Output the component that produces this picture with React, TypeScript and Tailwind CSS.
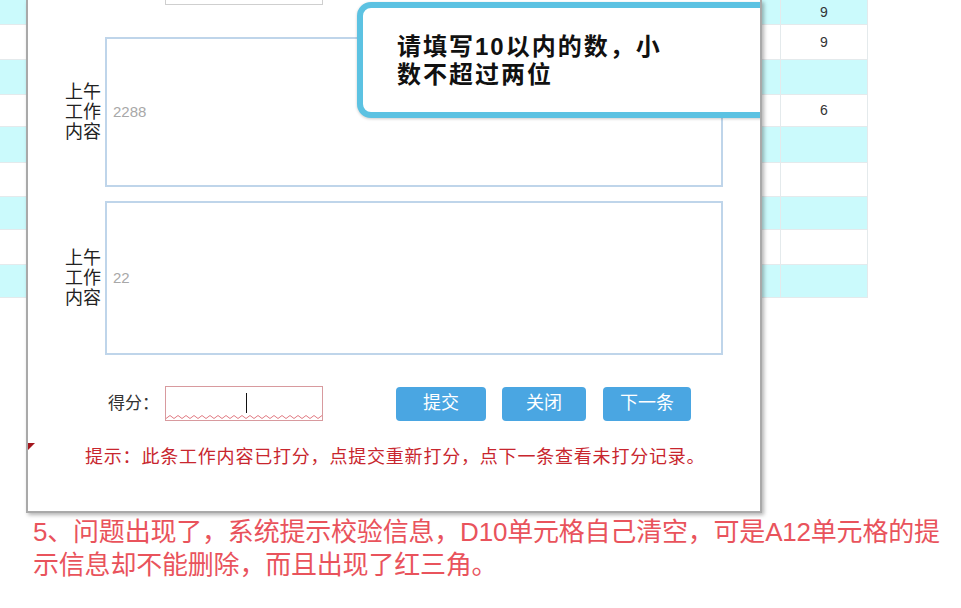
import React from 'react';

const rows = [
  { h: 25, cyan: true, value: '9' },
  { h: 35, cyan: false, value: '9' },
  { h: 35, cyan: true, value: '' },
  { h: 32, cyan: false, value: '6' },
  { h: 36, cyan: true, value: '' },
  { h: 34, cyan: false, value: '' },
  { h: 33, cyan: true, value: '' },
  { h: 35, cyan: false, value: '' },
  { h: 33, cyan: true, value: '' },
];

const WorkField: React.FC<{ value: string; height: string; className?: string }> = ({ value, height, className }) => (
  <div className={`flex items-center pl-[37px] ${className ?? ''}`}>
    <div className="w-[36px] text-[18px] leading-[20px] text-[#222] text-right">
      上午
      <br />
      工作
      <br />
      内容
    </div>
    <div className={`ml-[4px] w-[618px] ${height} border-2 border-[#bfd5ea] bg-white flex items-center pl-[6px] text-[15px] text-[#a8a8a8]`}>
      {value}
    </div>
  </div>
);

export default function App() {
  return (
    <div
      className="relative w-[961px] h-[608px] overflow-hidden bg-white"
      style={{ fontFamily: '"Liberation Sans", "Noto Sans CJK SC", sans-serif' }}
    >
      {/* sheet rows behind the dialog */}
      <div className="w-[868px]">
        {rows.map((row, i) => (
          <div key={i} className={`flex ${row.cyan ? 'bg-[#cbfafc]' : 'bg-white'}`} style={{ height: row.h }}>
            <div className="w-[781px] border-r border-b border-[#e4eaec]" />
            <div className="w-[87px] border-r border-b border-[#e4eaec] flex items-center justify-center text-[14px] text-[#333]">
              {row.value}
            </div>
          </div>
        ))}
      </div>

      <div className="mt-[218px] pl-[33px] text-[26px] leading-[33px] tracking-[-0.2px] text-[#e9535c] whitespace-nowrap">
        <div>5、问题出现了，系统提示校验信息，D10单元格自己清空，可是A12单元格的提</div>
        <div>示信息却不能删除，而且出现了红三角。</div>
      </div>

      {/* scoring dialog */}
      <div className="absolute left-[26px] top-0 w-[736px] h-[513px] bg-white border-x-2 border-b-2 border-[#a9a9a9] shadow-[2px_2px_4px_rgba(0,0,0,0.3)] overflow-hidden">
        <div className="ml-[137px] mt-[-30px] w-[158px] h-[35px] border border-[#cfcfcf]" />

        <WorkField value="2288" height="h-[150px]" className="mt-[32px]" />
        <WorkField value="22" height="h-[154px]" className="mt-[14px]" />

        <div className="mt-[31px] flex items-center pl-[80px] h-[35px]">
          <span className="shrink-0 whitespace-nowrap w-[57px] text-[17px] text-[#333]">得分：</span>
          <div className="relative shrink-0 w-[158px] h-[35px] border border-[#d89a9e] bg-white">
            <div className="absolute left-[80px] top-[6px] w-[1px] h-[20px] bg-[#111]" />
            <svg className="absolute left-0 bottom-[1px]" width="156" height="4" viewBox="0 0 156 4">
              <polyline
                fill="none"
                stroke="#e07a82"
                strokeWidth="1"
                points={Array.from({ length: 40 }, (_, k) => `${k * 4},${k % 2 === 0 ? 3.5 : 0.5}`).join(' ')}
              />
            </svg>
          </div>
          <button className="shrink-0 ml-[73px] w-[90px] h-[34px] rounded-[4px] bg-[#4aa6e2] text-white text-[18px]">提交</button>
          <button className="shrink-0 ml-[16px] w-[84px] h-[34px] rounded-[4px] bg-[#4aa6e2] text-white text-[18px]">关闭</button>
          <button className="shrink-0 ml-[17px] w-[88px] h-[34px] rounded-[4px] bg-[#4aa6e2] text-white text-[18px]">下一条</button>
        </div>

        <div className="mt-[24px] pl-[57px] text-[18px] leading-[24px] tracking-[0.8px] text-[#c8262e] whitespace-nowrap">
          提示：此条工作内容已打分，点提交重新打分，点下一条查看未打分记录。
        </div>

        {/* red comment marker */}
        <div className="absolute left-0 top-[443px] w-0 h-0 border-t-[7px] border-t-[#a3161d] border-r-[7px] border-r-transparent" />

        {/* validation tooltip */}
        <div className="absolute left-[329px] top-[2px] w-[440px] h-[116px] rounded-[14px] border-[6px] border-[#5cc2e2] bg-white shadow-[0_1px_3px_rgba(0,0,0,0.2)]">
          <div className="mt-[25px] ml-[34px] w-[272px] text-[24px] leading-[28px] tracking-[2px] font-bold text-[#111]">
            请填写10以内的数，小数不超过两位
          </div>
        </div>
      </div>
    </div>
  );
}
